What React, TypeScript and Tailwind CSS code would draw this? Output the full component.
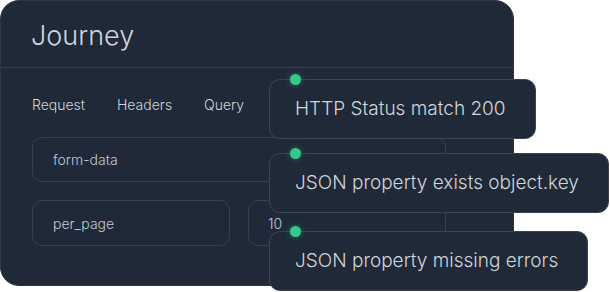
const checks = [
  { label: 'HTTP Status match 200', top: 'top-[79px]', width: 'w-[267px]' },
  { label: 'JSON property exists object.key', top: 'top-[153px]', width: 'w-[340px]' },
  { label: 'JSON property missing errors', top: 'top-[231px]', width: 'w-[319px]' },
]

const CheckCard = ({ label, top, width }: { label: string; top: string; width: string }) => (
  <div className={`absolute left-[269px] ${top} ${width}`}>
    <span className="absolute left-[21px] -top-[5px] w-[11px] h-[11px] rounded-full bg-[#34c98a] shadow-[0_0_6px_rgba(52,201,138,0.45)]" />
    <div className="h-[60px] flex items-center pl-[25px] rounded-[11px] border border-[#3a4453] bg-[#1f2937] text-[19px] font-light text-[#d1d5db]">
      {label}
    </div>
  </div>
)

export default function App() {
  return (
    <div className="relative w-[610px] h-[292px] bg-white font-['Inter',sans-serif]">
      <div className="w-[514px] h-[286px] rounded-[19px] bg-[#1f2937] border border-[#2c3644] overflow-hidden">
        <div className="h-[67px] border-b border-[#374151] flex items-center pl-[30px] pt-[5px]">
          <h1 className="text-[27px] font-light text-[#d1d5db]">Journey</h1>
        </div>
        <div className="px-[31px]">
          <div className="flex gap-[32px] pt-[26px] text-[14px] font-light text-[#d1d5db]">
            <span>Request</span>
            <span>Headers</span>
            <span>Query</span>
          </div>
          <div className="mt-[22px] w-[414px] h-[45px] rounded-[10px] border border-[#374151] flex items-center pl-[20px] text-[14px] font-light text-[#c5cad3]">
            form-data
          </div>
          <div className="mt-[18px] flex gap-[18px] text-[14px] font-light text-[#c5cad3]">
            <div className="w-[198px] h-[46px] rounded-[10px] border border-[#374151] flex items-center pl-[20px]">per_page</div>
            <div className="w-[198px] h-[46px] rounded-[10px] border border-[#374151] flex items-center pl-[19px]">10</div>
          </div>
        </div>
      </div>
      {checks.map((c) => (
        <CheckCard key={c.label} {...c} />
      ))}
    </div>
  )
}
